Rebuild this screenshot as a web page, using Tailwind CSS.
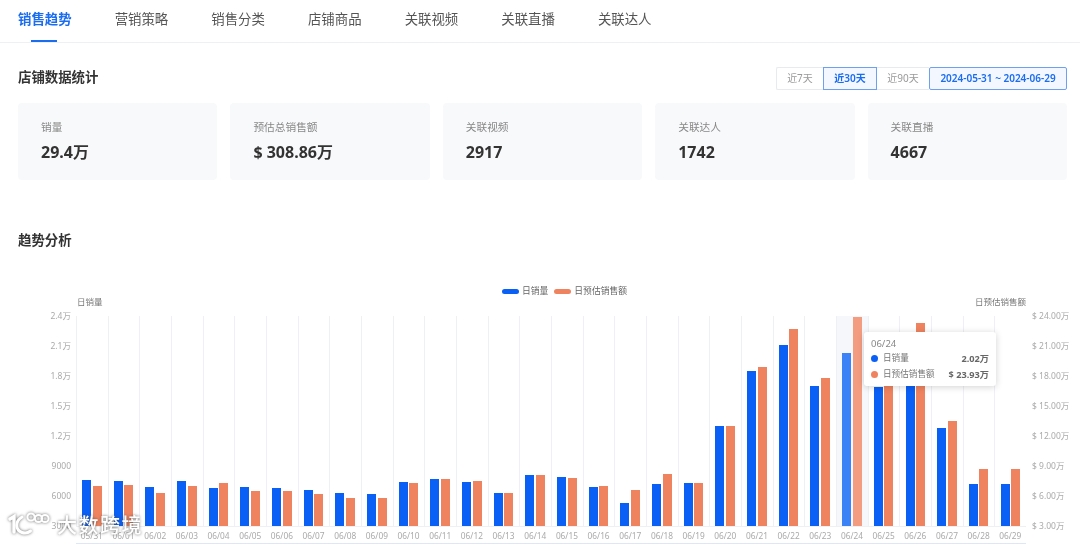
<!DOCTYPE html>
<html lang="zh-CN">

<head>
    <meta charset="UTF-8">
    <meta name="viewport" content="width=device-width, initial-scale=1.0">
    <script src="https://cdn.jsdelivr.net/npm/@tailwindcss/browser@4"></script>
    <title>销售趋势</title>
</head>

<body class="bg-white">
    <div class="relative w-[1080px] h-[545px] overflow-hidden font-['Noto_Sans','Noto_Sans_CJK_SC',sans-serif] blur-[0.5px]">

        <nav class="flex h-[43px] gap-[43.1px] pl-[18px] border-b border-[#eef0f3] text-[13.4px] text-[#555]">
            <a class="relative flex items-center pb-[3px] font-bold text-[#1a6cf0]">销售趋势
                <span class="absolute left-[13px] bottom-0 w-[26px] h-[2px] bg-[#1a6cf0]"></span>
            </a>
            <a class="flex items-center pb-[3px]">营销策略</a>
            <a class="flex items-center pb-[3px]">销售分类</a>
            <a class="flex items-center pb-[3px]">店铺商品</a>
            <a class="flex items-center pb-[3px]">关联视频</a>
            <a class="flex items-center pb-[3px]">关联直播</a>
            <a class="flex items-center pb-[3px]">关联达人</a>
        </nav>

        <div class="pr-[13px] pl-[18px]">
            <div class="flex justify-between items-center h-[23px] mt-[24px]">
                <h2 class="text-[13.4px] font-bold text-[#333] pb-[2px]">店铺数据统计</h2>
                <div class="flex h-[23px] text-[10px] text-[#999]">
                    <button class="w-[47px] border border-[#e8eaee] border-r-0 rounded-l-[2px]">近7天</button>
                    <button class="w-[54px] border border-[#6f9ff0] bg-[#f3f7ff] text-[#1a6cf0] font-semibold">近30天</button>
                    <button class="w-[52px] border-y border-[#e8eaee]">近90天</button>
                    <button class="w-[138px] border border-[#6f9ff0] bg-[#f3f7ff] text-[#1a6cf0] font-semibold rounded-[2px]">2024-05-31 ~ 2024-06-29</button>
                </div>
            </div>

            <div class="grid grid-cols-5 gap-[13px] h-[77px] mt-[13px]">
                <div class="bg-[#f8f9fb] rounded-[4px] pl-[23px] pt-[17px]">
                    <p class="text-[10.7px] leading-[14px] text-[#888]">销量</p>
                    <p class="text-[16px] leading-[20px] mt-[8px] font-bold text-[#333]">29.4万</p>
                </div>
                <div class="bg-[#f8f9fb] rounded-[4px] pl-[23px] pt-[17px]">
                    <p class="text-[10.7px] leading-[14px] text-[#888]">预估总销售额</p>
                    <p class="text-[16px] leading-[20px] mt-[8px] font-bold text-[#333]">$ 308.86万</p>
                </div>
                <div class="bg-[#f8f9fb] rounded-[4px] pl-[23px] pt-[17px]">
                    <p class="text-[10.7px] leading-[14px] text-[#888]">关联视频</p>
                    <p class="text-[16px] leading-[20px] mt-[8px] font-bold text-[#333]">2917</p>
                </div>
                <div class="bg-[#f8f9fb] rounded-[4px] pl-[23px] pt-[17px]">
                    <p class="text-[10.7px] leading-[14px] text-[#888]">关联达人</p>
                    <p class="text-[16px] leading-[20px] mt-[8px] font-bold text-[#333]">1742</p>
                </div>
                <div class="bg-[#f8f9fb] rounded-[4px] pl-[23px] pt-[17px]">
                    <p class="text-[10.7px] leading-[14px] text-[#888]">关联直播</p>
                    <p class="text-[16px] leading-[20px] mt-[8px] font-bold text-[#333]">4667</p>
                </div>
            </div>

            <h2 class="text-[13.4px] leading-[20px] font-bold text-[#333] mt-[50px]">趋势分析</h2>

            <div class="flex justify-center items-center gap-[6px] h-[11px] mt-[36px] ml-[44px] text-[8.8px] leading-[11px] text-[#666]">
                <span class="flex items-center gap-[3px]"><i class="w-[17px] h-[5px] rounded-full bg-[#0a5ff5]"></i>日销量</span>
                <span class="flex items-center gap-[3px]"><i class="w-[17px] h-[5px] rounded-full bg-[#ef835f]"></i>日预估销售额</span>
            </div>

            <div class="flex justify-between h-[10px] leading-[10px] ml-[59px] mr-[41px] text-[8.5px] text-[#777]">
                <span>日销量</span>
                <span>日预估销售额</span>
            </div>

            <div class="flex mt-[9px]">
                <div class="flex flex-col justify-between shrink-0 w-[53px] h-[222px] -mt-[6px] text-right text-[8.5px] leading-[12px] text-[#aaa]">
                    <span>2.4万</span><span>2.1万</span><span>1.8万</span><span>1.5万</span><span>1.2万</span><span>9000</span><span>6000</span><span>3000</span>
                </div>
                <div class="relative shrink-0 w-[950px] ml-[5px]">
                    <div id="plot" class="flex h-[211px] border-b border-[#eef0f3]"></div>
                    <div id="dates" class="flex h-[16px] pt-[3px] items-center text-center text-[8.3px] text-[#aaa]"></div>
                    <div class="h-px bg-[#dfe6f5]"></div>

                    <div class="absolute left-[788px] top-[16px] w-[132px] h-[54px] px-[7px] pt-[5px] bg-white rounded-[3px] shadow-[0_1px_7px_rgba(0,0,0,0.18)] text-[8.6px] leading-[15.5px] text-[#777]">
                        <p class="text-[9.5px] leading-[14px] text-[#888]">06/24</p>
                        <p class="flex items-center"><i class="w-[7px] h-[7px] rounded-full bg-[#0a5ff5] mr-[5px]"></i>日销量<b class="ml-auto text-[9.2px] text-[#666]">2.02万</b></p>
                        <p class="flex items-center"><i class="w-[7px] h-[7px] rounded-full bg-[#ef835f] mr-[5px]"></i>日预估销售额<b class="ml-auto text-[9.2px] text-[#666]">$ 23.93万</b></p>
                    </div>
                </div>
                <div class="flex flex-col justify-between shrink-0 whitespace-nowrap h-[222px] -mt-[6px] pl-[6px] text-[8.5px] leading-[12px] text-[#aaa]">
                    <span>$ 24.00万</span><span>$ 21.00万</span><span>$ 18.00万</span><span>$ 15.00万</span><span>$ 12.00万</span><span>$ 9.00万</span><span>$ 6.00万</span><span>$ 3.00万</span>
                </div>
            </div>
        </div>

        <!-- watermark -->
        <div class="absolute left-[8px] top-[509px] flex items-center gap-[7px] drop-shadow-[0_0_1.5px_rgba(70,70,70,0.8)]">
            <svg width="42" height="34" viewBox="0 0 42 34" fill="none" stroke="white" stroke-width="3" stroke-linecap="round">
                <path d="M2 10 L6 7.500 V23" stroke-width="3.400"/>
                <path d="M14 8 C7 12 7 21 14 23.500 C17 24.500 20 24 22.500 22"/>
                <circle cx="23" cy="8" r="3.600" stroke-width="2"/>
                <circle cx="30.500" cy="9.500" r="3.600" stroke-width="2"/>
                <circle cx="37" cy="9.500" r="3.600" stroke-width="2"/>
            </svg>
            <span class="text-[20px] leading-[30px] tracking-[1.5px] font-medium text-white">大数跨境</span>
        </div>
    </div>

    <script>
        // bar tops measured from the top of the plot, in px
        const data = [
            [164, 170], [165, 169], [171, 177], [165, 170], [172, 167],
            [171, 175], [172, 175], [174, 178], [177, 182], [178, 182],
            [166, 167], [163, 163], [166, 165], [177, 177], [159, 159],
            [161, 162], [171, 170], [187, 174], [168, 158], [167, 167],
            [110, 110], [55, 51], [29, 13], [70, 62], [37, 1],
            [71, 64], [70, 7], [112, 105], [168, 153], [168, 153]
        ];
        const plot = document.getElementById("plot");
        const dates = document.getElementById("dates");

        data.forEach((row, i) => {
            const d = i === 0 ? "05/31" : "06/" + String(i).padStart(2, "0");
            const active = i === 24;
            plot.innerHTML += `
                <div class="flex-1 flex items-end justify-center gap-[1.6px] shadow-[inset_1px_0_0_#eef0f5] ${active ? "bg-[#f5f7fb]" : ""}">
                    <div class="w-[9px] ${active ? "bg-[#3b82f7]" : "bg-[#0a5ff5]"}" style="height:${210 - row[0]}px"></div>
                    <div class="w-[9px] ${active ? "bg-[#f39c80]" : "bg-[#ef835f]"}" style="height:${210 - row[1]}px"></div>
                </div>`;
            dates.innerHTML += `<span class="flex-1">${d}</span>`;
        });
    </script>
</body>

</html>
